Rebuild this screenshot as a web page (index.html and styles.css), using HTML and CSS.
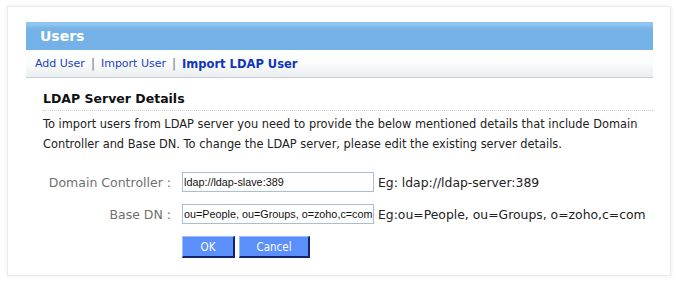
FILE: index.html
```html
<!DOCTYPE html>
<html>
<head>
<meta charset="utf-8">
<link rel="stylesheet" href="styles.css">
</head>
<body>
<div class="panel">
  <div class="header">Users</div>
  <div class="tabs">
    <a class="tab" href="#">Add User</a><span class="sep">|</span><a class="tab" href="#">Import User</a><span class="sep">|</span><a class="tab active" href="#">Import LDAP User</a>
  </div>
  <div class="content">
    <h2 class="title">LDAP Server Details</h2>
    <p class="desc">To import users from LDAP server you need to provide the below mentioned details that include Domain Controller and Base DN. To change the LDAP server, please edit the existing server details.</p>
    <div class="form">
      <label class="label">Domain Controller :</label>
      <input class="field" type="text" value="ldap://ldap-slave:389">
      <span class="hint">Eg: ldap://ldap-server:389</span>
      <label class="label">Base DN :</label>
      <input class="field" type="text" value="ou=People, ou=Groups, o=zoho,c=com">
      <span class="hint">Eg:ou=People, ou=Groups, o=zoho,c=com</span>
      <div class="actions">
        <button class="btn btn-ok">OK</button><button class="btn btn-cancel">Cancel</button>
      </div>
    </div>
  </div>
</div>
</body>
</html>
```
FILE: styles.css
```css
html, body {
  margin: 0;
  padding: 0;
  background: #ffffff;
}
body {
  font-family: "DejaVu Sans", Verdana, sans-serif;
  width: 676px;
  height: 284px;
  overflow: hidden;
}
.panel {
  box-sizing: border-box;
  margin: 6px 0 0 7px;
  width: 664px;
  height: 270px;
  border: 1px solid #ebebeb;
  box-shadow: 0 0 4px rgba(0, 0, 0, 0.08);
  background: #ffffff;
  padding: 15px 17px 0 18px;
}
.header {
  height: 28px;
  box-sizing: border-box;
  background: linear-gradient(#8ec6f2 0px, #8ec6f2 3px, #7db8ea 5px, #74b1e6 9px, #74b1e6 100%);
  color: #ffffff;
  font-weight: bold;
  font-size: 14px;
  line-height: 28px;
  padding-left: 14px;
}
.tabs {
  height: 28px;
  box-sizing: border-box;
  background: linear-gradient(#fdfefe 0%, #fbfcfc 50%, #e9eef0 100%);
  border-bottom: 1px solid #c7cfd2;
  display: flex;
  align-items: center;
  padding-left: 9px;
  font-size: 11px;
}
.tab {
  color: #1a3fc4;
  text-decoration: none;
}
.tab.active {
  font-weight: bold;
  color: #0f36b8;
  font-size: 11.5px;
}
.sep {
  color: #777777;
  margin: 0 6px;
  font-size: 12px;
}
.content {
  padding: 0 0 0 17px;
}
.title {
  margin: 12px 0 0 0;
  font-size: 12.5px;
  line-height: 18px;
  font-weight: bold;
  color: #111111;
  padding-bottom: 2px;
  border-bottom: 1px dotted #cfcfcf;
}
.desc {
  margin: 3px 0 0 0;
  font-size: 11.4px;
  line-height: 20px;
  color: #222222;
}
.form {
  margin-top: 18px;
  display: grid;
  grid-template-columns: 139px 192px 1fr;
  row-gap: 12px;
  align-items: center;
}
.label {
  text-align: right;
  padding-right: 11px;
  color: #707070;
  font-size: 12.5px;
  white-space: nowrap;
}
.field {
  box-sizing: border-box;
  width: 192px;
  height: 20px;
  margin: 0;
  border: 1px solid #a9bdd3;
  padding: 0 0 0 1px;
  font-family: "Liberation Sans", Arial, sans-serif;
  font-size: 10.8px;
  color: #111111;
  outline: none;
}
.hint {
  padding-left: 4px;
  font-size: 12.4px;
  color: #222222;
  white-space: nowrap;
}
.actions {
  grid-column: 2 / 4;
  display: flex;
  gap: 4px;
}
.btn {
  box-sizing: border-box;
  height: 22px;
  margin: 0;
  padding: 0;
  background: #5b8ffa;
  color: #ffffff;
  border-style: solid;
  border-width: 1px 2px 2px 1px;
  border-color: #9dbcfb #13246e #13246e #9dbcfb;
  font-family: "DejaVu Sans Condensed", "Liberation Sans", sans-serif;
  font-size: 11.5px;
}
.btn-ok { width: 53px; }
.btn-cancel { width: 71px; }
```
